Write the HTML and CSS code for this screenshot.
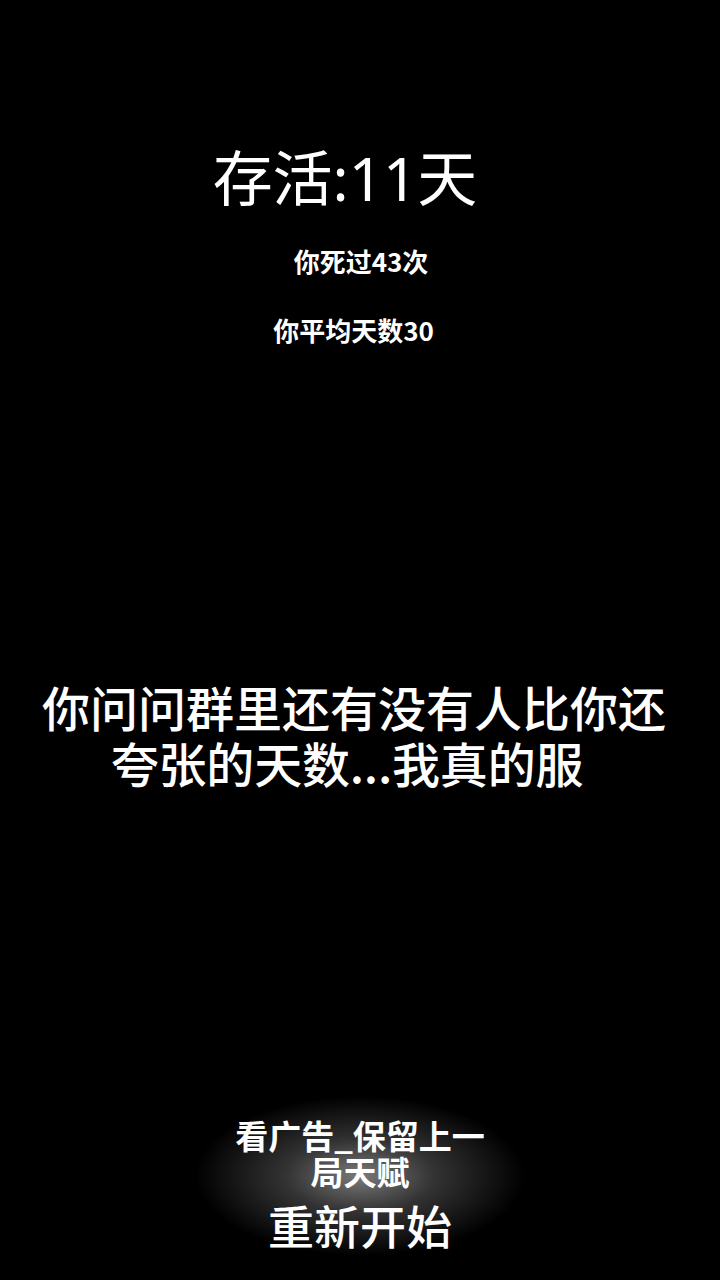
FILE: index.html
```html
<!DOCTYPE html>
<html lang="zh-CN">
<head>
<meta charset="utf-8">
<title>存活</title>
<link rel="stylesheet" href="styles.css">
</head>
<body>
<div class="screen">
  <div class="title">存活:11天</div>
  <div class="stat stat-deaths">你死过43次</div>
  <div class="stat stat-avg">你平均天数30</div>
  <div class="message">
    <div class="msg-line">你问问群里还有没有人比你还</div>
    <div class="msg-line msg-line-2">夸张的天数...我真的服</div>
  </div>
  <div class="actions">
    <div class="glow"></div>
    <div class="ad-btn">看广告_保留上一<br>局天赋</div>
    <div class="restart-btn">重新开始</div>
  </div>
</div>
</body>
</html>
```
FILE: styles.css
```css
html, body {
  margin: 0;
  padding: 0;
  background: #000;
}
.screen {
  width: 720px;
  height: 1280px;
  box-sizing: border-box;
  padding-top: 143px;
  padding-bottom: 31px;
  display: flex;
  flex-direction: column;
  align-items: center;
  color: #fff;
  font-family: "Noto Sans CJK SC", "Noto Sans", sans-serif;
  text-align: center;
  overflow: hidden;
}
.title {
  font-family: "Noto Sans", "Noto Sans CJK SC", sans-serif;
  font-size: 60px;
  line-height: 70px;
  font-weight: 400;
  padding-right: 30px;
}
.stat {
  font-size: 26px;
  line-height: 30px;
  font-weight: 700;
}
.stat-deaths {
  margin-top: 33px;
  padding-left: 2px;
}
.stat-avg {
  margin-top: 39px;
  padding-right: 13px;
}
.message {
  margin-top: 333px;
  font-size: 48px;
  line-height: 56px;
  font-weight: 500;
  width: 640px;
  padding-right: 12px;
  white-space: nowrap;
}
.msg-line-2 {
  padding-right: 14px;
  letter-spacing: -0.2px;
}
.actions {
  margin-top: auto;
  position: relative;
  display: flex;
  flex-direction: column;
  align-items: center;
  width: 400px;
}
.glow {
  position: absolute;
  left: -20px;
  right: -20px;
  top: -30px;
  bottom: -40px;
  background: radial-gradient(ellipse 165px 80px at 50% 44%, rgba(255,255,255,0.48) 0%, rgba(255,255,255,0.2) 45%, rgba(255,255,255,0) 100%);
  pointer-events: none;
}
.ad-btn {
  position: relative;
  font-size: 33px;
  line-height: 36px;
  font-weight: 700;
}
.restart-btn {
  position: relative;
  margin-top: 10px;
  font-size: 46px;
  line-height: 50px;
  font-weight: 500;
}
```
